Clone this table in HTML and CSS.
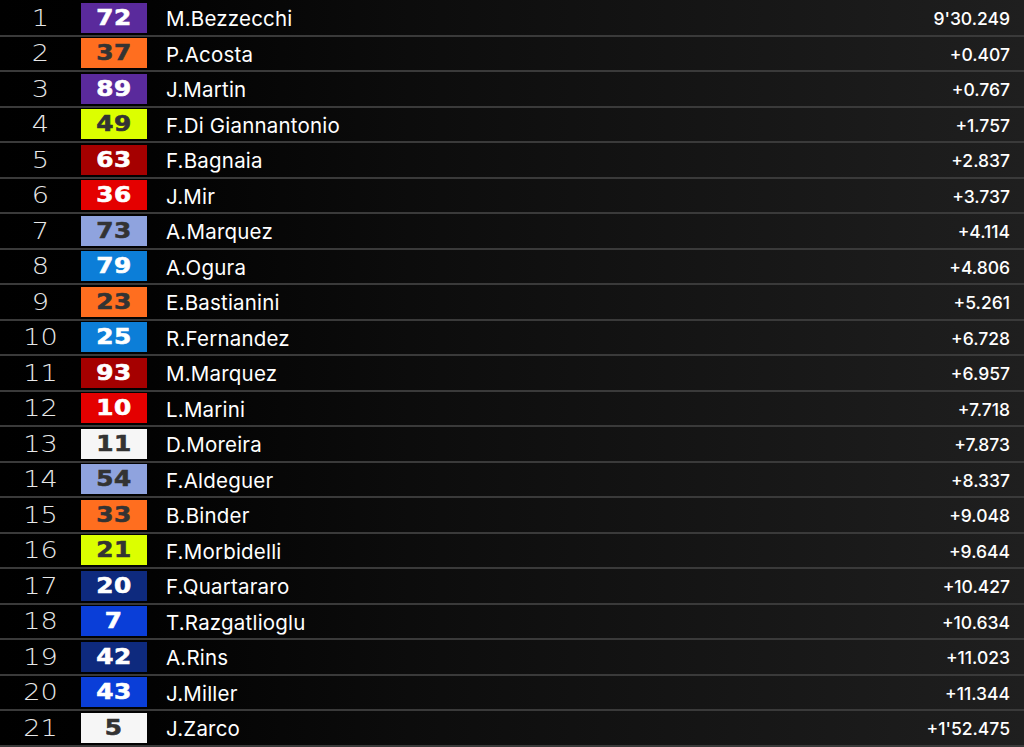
FILE: index.html
```html
<!DOCTYPE html>
<html>
<head>
<meta charset="utf-8">
<link rel="stylesheet" href="styles.css">
</head>
<body>
<div class="table">
  <div class="row"><span class="pos">1</span><span class="badge purple"><span class="num">72</span></span><span class="name">M.Bezzecchi</span><span class="time">9'30.249</span></div>
  <div class="row"><span class="pos">2</span><span class="badge orange dark"><span class="num">37</span></span><span class="name">P.Acosta</span><span class="time">+0.407</span></div>
  <div class="row"><span class="pos">3</span><span class="badge purple"><span class="num">89</span></span><span class="name">J.Martin</span><span class="time">+0.767</span></div>
  <div class="row"><span class="pos">4</span><span class="badge yellow dark"><span class="num">49</span></span><span class="name">F.Di Giannantonio</span><span class="time">+1.757</span></div>
  <div class="row"><span class="pos">5</span><span class="badge maroon"><span class="num">63</span></span><span class="name">F.Bagnaia</span><span class="time">+2.837</span></div>
  <div class="row"><span class="pos">6</span><span class="badge red"><span class="num">36</span></span><span class="name">J.Mir</span><span class="time">+3.737</span></div>
  <div class="row"><span class="pos">7</span><span class="badge lightblue dark"><span class="num">73</span></span><span class="name">A.Marquez</span><span class="time">+4.114</span></div>
  <div class="row"><span class="pos">8</span><span class="badge sky"><span class="num">79</span></span><span class="name">A.Ogura</span><span class="time">+4.806</span></div>
  <div class="row"><span class="pos">9</span><span class="badge orange dark"><span class="num">23</span></span><span class="name">E.Bastianini</span><span class="time">+5.261</span></div>
  <div class="row"><span class="pos">10</span><span class="badge sky"><span class="num">25</span></span><span class="name">R.Fernandez</span><span class="time">+6.728</span></div>
  <div class="row"><span class="pos">11</span><span class="badge maroon"><span class="num">93</span></span><span class="name">M.Marquez</span><span class="time">+6.957</span></div>
  <div class="row"><span class="pos">12</span><span class="badge red"><span class="num">10</span></span><span class="name">L.Marini</span><span class="time">+7.718</span></div>
  <div class="row"><span class="pos">13</span><span class="badge white dark"><span class="num">11</span></span><span class="name">D.Moreira</span><span class="time">+7.873</span></div>
  <div class="row"><span class="pos">14</span><span class="badge lightblue dark"><span class="num">54</span></span><span class="name">F.Aldeguer</span><span class="time">+8.337</span></div>
  <div class="row"><span class="pos">15</span><span class="badge orange dark"><span class="num">33</span></span><span class="name">B.Binder</span><span class="time">+9.048</span></div>
  <div class="row"><span class="pos">16</span><span class="badge yellow dark"><span class="num">21</span></span><span class="name">F.Morbidelli</span><span class="time">+9.644</span></div>
  <div class="row"><span class="pos">17</span><span class="badge navy"><span class="num">20</span></span><span class="name">F.Quartararo</span><span class="time">+10.427</span></div>
  <div class="row"><span class="pos">18</span><span class="badge blue"><span class="num">7</span></span><span class="name">T.Razgatlioglu</span><span class="time">+10.634</span></div>
  <div class="row"><span class="pos">19</span><span class="badge navy"><span class="num">42</span></span><span class="name">A.Rins</span><span class="time">+11.023</span></div>
  <div class="row"><span class="pos">20</span><span class="badge blue"><span class="num">43</span></span><span class="name">J.Miller</span><span class="time">+11.344</span></div>
  <div class="row"><span class="pos">21</span><span class="badge white dark"><span class="num">5</span></span><span class="name">J.Zarco</span><span class="time">+1'52.475</span></div>
</div>
</body>
</html>
```
FILE: styles.css
```css
html, body {
  margin: 0;
  padding: 0;
  height: 747px;
  overflow: hidden;
}
body {
  background: linear-gradient(90deg, #000 0%, #020202 15%, #0c0c0c 40%, #1f1f1f 100%);
  color: #fff;
  font-family: "Inter", "Noto Sans", sans-serif;
}
.table {
  display: flex;
  flex-direction: column;
  padding-top: 1px;
}
.row {
  display: flex;
  align-items: center;
  height: 33.5px;
  border-bottom: 2px solid #3a3a3a;
}
.pos {
  width: 81px;
  text-align: center;
  font-family: "DejaVu Sans", sans-serif;
  font-weight: 200;
  font-size: 23px;
  color: #e8e8e8;
  transform: scaleX(1.18);
}
.badge {
  width: 66px;
  height: 30px;
  display: flex;
  align-items: center;
  justify-content: center;
  color: #fff;
}
.num {
  font-family: "DejaVu Sans", sans-serif;
  font-weight: 700;
  font-size: 21px;
  letter-spacing: 0.5px;
  transform: scaleX(1.18);
  -webkit-text-stroke: 0.6px currentColor;
}
.badge.dark { color: #333; }
.purple { background: #5a2a9c; }
.orange { background: #ff6e1f; }
.yellow { background: #dcff00; }
.maroon { background: #a50000; }
.red { background: #e40000; }
.lightblue { background: #8fa3de; }
.sky { background: #0c7ed8; }
.white { background: #f6f6f6; }
.navy { background: #0e2a7e; }
.blue { background: #0a3ed8; }
.name {
  margin-left: 19px;
  flex: 1;
  font-size: 20.5px;
  letter-spacing: 0.2px;
  color: #fff;
  padding-top: 2px;
}
.time {
  margin-right: 14px;
  font-size: 17.5px;
  font-weight: 500;
  color: #fff;
  text-align: right;
  padding-top: 2px;
}
```
